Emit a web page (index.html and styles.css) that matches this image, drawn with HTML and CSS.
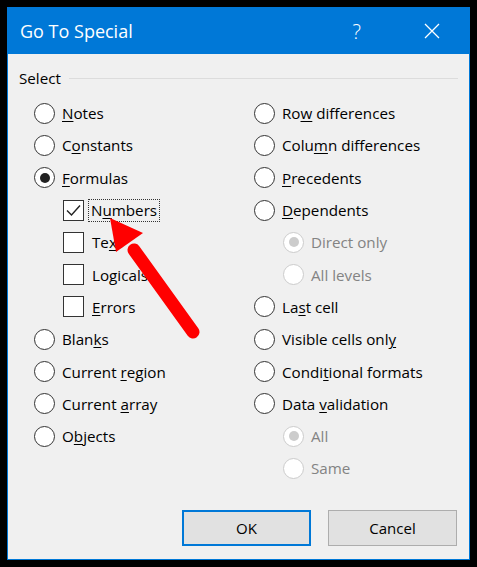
FILE: index.html
```html
<!DOCTYPE html>
<html lang="en">
<head>
    <meta charset="UTF-8">
    <title>Go To Special</title>
    <link rel="stylesheet" href="styles.css">
</head>
<body>
    <div class="dialog">
        <!-- Title bar -->
        <div class="titlebar">
            <span class="title">Go To Special</span>
            <span class="help">?</span>
            <svg class="close" width="16" height="16" viewBox="0 0 16 16">
                <path d="M1 1 L15 15 M15 1 L1 15" stroke="#fff" stroke-width="1.3" fill="none"/>
            </svg>
        </div>

        <!-- Body -->
        <div class="content">
            <div class="legend">
                <span>Select</span>
                <div class="legend-line"></div>
            </div>

            <div class="columns">
                <div class="col">
                    <div class="row"><span class="radio"></span><span><u>N</u>otes</span></div>
                    <div class="row"><span class="radio"></span><span>C<u>o</u>nstants</span></div>
                    <div class="row"><span class="radio checked"></span><span><u>F</u>ormulas</span></div>
                    <div class="row sub"><span class="check checked"><svg width="19" height="19" viewBox="0 0 19 19"><path d="M3 9.5 L7.5 14 L16 4.5" stroke="#222" stroke-width="1.4" fill="none"/></svg></span><span class="focus">N<u>u</u>mbers</span></div>
                    <div class="row sub"><span class="check"></span><span class="label-gap">Te<u>x</u>t</span></div>
                    <div class="row sub"><span class="check"></span><span class="label-gap">Lo<u>g</u>icals</span></div>
                    <div class="row sub"><span class="check"></span><span class="label-gap"><u>E</u>rrors</span></div>
                    <div class="row"><span class="radio"></span><span>Blan<u>k</u>s</span></div>
                    <div class="row"><span class="radio"></span><span>Current <u>r</u>egion</span></div>
                    <div class="row"><span class="radio"></span><span>Current <u>a</u>rray</span></div>
                    <div class="row"><span class="radio"></span><span>O<u>b</u>jects</span></div>
                </div>
                <div class="col">
                    <div class="row"><span class="radio"></span><span>Ro<u>w</u> differences</span></div>
                    <div class="row"><span class="radio"></span><span>Colu<u>m</u>n differences</span></div>
                    <div class="row"><span class="radio"></span><span><u>P</u>recedents</span></div>
                    <div class="row"><span class="radio"></span><span><u>D</u>ependents</span></div>
                    <div class="row sub disabled"><span class="radio checked"></span><span>Direct only</span></div>
                    <div class="row sub disabled"><span class="radio"></span><span>All levels</span></div>
                    <div class="row"><span class="radio"></span><span>La<u>s</u>t cell</span></div>
                    <div class="row"><span class="radio"></span><span>Visible cells onl<u>y</u></span></div>
                    <div class="row"><span class="radio"></span><span>Condi<u>t</u>ional formats</span></div>
                    <div class="row"><span class="radio"></span><span>Data <u>v</u>alidation</span></div>
                    <div class="row sub disabled"><span class="radio checked"></span><span>All</span></div>
                    <div class="row sub disabled"><span class="radio"></span><span>Same</span></div>
                </div>
            </div>

            <div class="buttons">
                <button class="btn default">OK</button>
                <button class="btn">Cancel</button>
            </div>

            <!-- Red pointer arrow drawn over the list -->
            <svg class="arrow" width="463" height="505" viewBox="0 0 463 505">
                <line x1="185" y1="278" x2="126" y2="196" stroke="#ff0000" stroke-width="13" stroke-linecap="round"/>
                <polygon points="102,164 135,179 108,198" fill="#ff0000"/>
            </svg>
        </div>
    </div>
</body>
</html>
```

FILE: styles.css
```css
* {
    margin: 0;
    padding: 0;
    box-sizing: border-box;
}

body {
    background: #000;
    padding: 7px;
    font-family: 'Open Sans', 'Noto Sans', sans-serif;
    font-size: 15.2px;
    color: #000;
}

.dialog {
    width: 463px;
    height: 553px;
    border: 1px solid #0078d7;
    background: #f0f0f0;
    display: flex;
    flex-direction: column;
}

/* Title bar */
.titlebar {
    height: 46px;
    background: #0078d7;
    color: #fff;
    display: flex;
    align-items: center;
    padding-left: 12px;
}

.titlebar .title {
    font-size: 18px;
    flex: 1;
}

.titlebar .help {
    font-size: 20px;
    font-weight: 300;
    margin-right: 63px;
}

.titlebar .close {
    margin-right: 29px;
}

/* Content */
.content {
    position: relative;
    flex: 1;
    display: flex;
    flex-direction: column;
}

.legend {
    display: flex;
    align-items: center;
    gap: 8px;
    margin-top: 13px;
    padding: 0 11px;
    height: 22px;
}

.legend-line {
    flex: 1;
    height: 1px;
    background: #dcdcdc;
}

.columns {
    display: grid;
    grid-template-columns: 220px 1fr;
    padding-left: 26px;
    margin-top: 8px;
}

.row {
    height: 32.3px;
    display: flex;
    align-items: center;
    gap: 7px;
    white-space: nowrap;
}

.row.sub {
    padding-left: 29px;
}

.row.disabled {
    color: #838383;
}

.radio {
    width: 21px;
    height: 21px;
    border: 1.5px solid #333;
    border-radius: 50%;
    background: #fff;
    display: flex;
    align-items: center;
    justify-content: center;
    flex-shrink: 0;
}

.radio.checked::after {
    content: "";
    width: 10px;
    height: 10px;
    border-radius: 50%;
    background: #222;
}

.disabled .radio {
    border-color: #cccccc;
}

.disabled .radio.checked::after {
    background: #cccccc;
}

.check {
    width: 21px;
    height: 21px;
    border: 1px solid #333;
    background: #fff;
    flex-shrink: 0;
}

.check svg {
    display: block;
}

.label-gap {
    margin-left: 1px;
}

.focus {
    outline: 1px dotted #333;
    padding: 0 2px;
    margin-left: -2px;
    line-height: 21px;
}

u {
    text-underline-offset: 2px;
}

/* Buttons */
.buttons {
    margin-top: auto;
    margin-bottom: 13px;
    padding-right: 12px;
    display: flex;
    justify-content: flex-end;
    gap: 17px;
}

.btn {
    width: 129px;
    height: 36px;
    background: #e1e1e1;
    border: 1px solid #adadad;
    font-family: inherit;
    font-size: 15px;
    color: #000;
}

.btn.default {
    border: 2px solid #0078d7;
}

.arrow {
    position: absolute;
    left: 0;
    top: 0;
    pointer-events: none;
}
```
